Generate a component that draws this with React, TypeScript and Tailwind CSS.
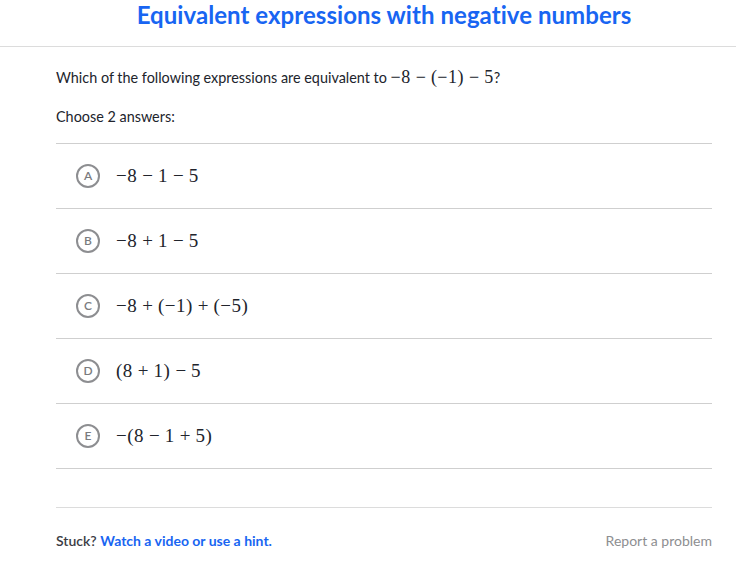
import React from 'react'

type Tok = string

// a tiny math renderer: 'op:' tokens get binary-operator spacing
function Math({ toks, size = 'text-[19px]' }: { toks: Tok[]; size?: string }) {
  return (
    <span className={`${size} text-[#21242c]`} style={{ fontFamily: '"Liberation Serif", "DejaVu Serif", serif' }}>
      {toks.map((t, i) =>
        t.startsWith('op:') ? (
          <span key={i} className="mx-[5px]">{t.slice(3)}</span>
        ) : (
          <span key={i} className="tracking-[0.5px]">{t}</span>
        )
      )}
    </span>
  )
}

const choices: { letter: string; toks: Tok[] }[] = [
  { letter: 'A', toks: ['−8', 'op:−', '1', 'op:−', '5'] },
  { letter: 'B', toks: ['−8', 'op:+', '1', 'op:−', '5'] },
  { letter: 'C', toks: ['−8', 'op:+', '(−1)', 'op:+', '(−5)'] },
  { letter: 'D', toks: ['(8', 'op:+', '1)', 'op:−', '5'] },
  { letter: 'E', toks: ['−(8', 'op:−', '1', 'op:+', '5)'] },
]

export default function App() {
  return (
    <div className="w-[736px] h-[565px] bg-white text-[#21242c]" style={{ fontFamily: 'Lato, "Open Sans", sans-serif' }}>
      <div className="h-[47px] border-b border-[#dcdcdc] flex justify-center pl-[32px]">
        <h1 className="text-[24px] leading-[30px] font-bold text-[#1865f2] tracking-[0.05px]">
          Equivalent expressions with negative numbers
        </h1>
      </div>

      <div className="ml-[56px] mr-[24px]">
        <p className="mt-[20px] text-[14.4px] leading-[20px] h-[20px]">
          Which of the following expressions are equivalent to{' '}
          <Math toks={['−8', 'op:−', '(−1)', 'op:−', '5']} size="text-[18px]" />?
        </p>
        <p className="mt-[20px] text-[14.4px] leading-[20px]">Choose 2 answers:</p>

        <div className="mt-[16px] border-t border-[#cfcfcf]">
          {choices.map((c) => (
            <div key={c.letter} className="h-[65px] border-b border-[#cfcfcf] flex items-center pl-[20px]">
              <span className="w-[24px] h-[24px] rounded-full border-2 border-[#8d8e91] flex items-center justify-center text-[12px] font-semibold text-[#7a7b7e]">
                {c.letter}
              </span>
              <span className="ml-[16px]">
                <Math toks={c.toks} />
              </span>
            </div>
          ))}
        </div>

        <div className="mt-[38px] border-t border-[#dcdcdc] flex items-center justify-between pt-[22px]">
          <p className="text-[14px] leading-[20px]">
            <span className="font-semibold text-[#3b3d45]">Stuck?</span>{' '}
            <span className="font-bold text-[#1865f2]">Watch a video or use a hint.</span>
          </p>
          <span className="text-[14px] text-[#8d8e91]">Report a problem</span>
        </div>
      </div>
    </div>
  )
}
